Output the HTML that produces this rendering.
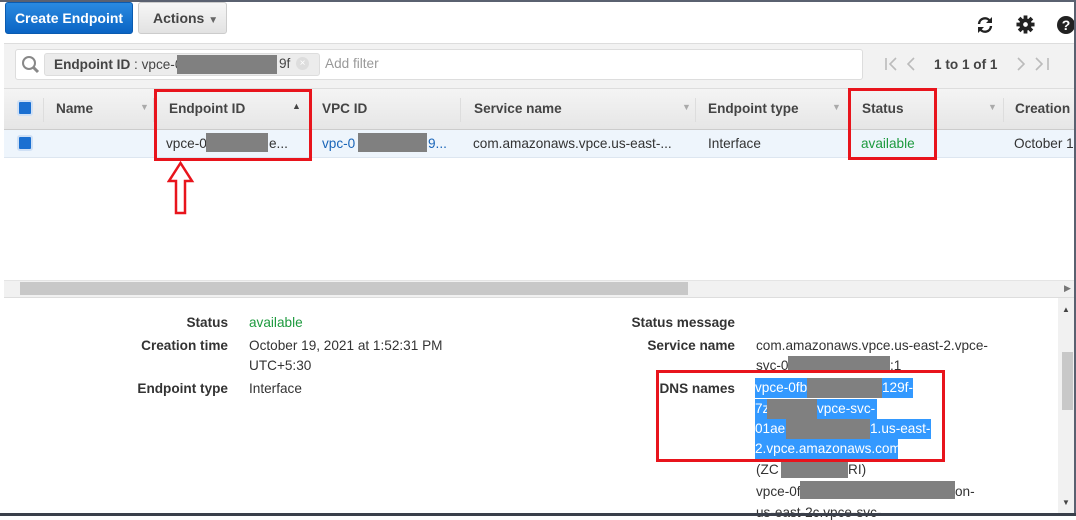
<!DOCTYPE html>
<html><head><style>
*{margin:0;padding:0;box-sizing:border-box}
body{width:1076px;height:516px;overflow:hidden;background:#fff;font-family:"Liberation Sans",Arial,sans-serif;font-size:13.6px;color:#333;position:relative}
.a{position:absolute;white-space:nowrap}
.red{position:absolute;border:3px solid #e8141c}
.blk{position:absolute;background:#808080}
.hd{font-weight:bold;color:#444}
.lbl{font-weight:bold;color:#333;text-align:right}
.sel{background:#3399ff;color:#fff;position:absolute;white-space:nowrap;height:20px;line-height:20px}
</style></head><body>
<div class="a" style="left:0;top:0;width:1076px;height:2px;background:#5a6170"></div>
<div class="a" style="left:5px;top:2px;width:128px;height:32px;border-radius:3px;background:linear-gradient(#2a8ae0,#0a64c4);border:1px solid #0a5bb0;color:#fff;font-weight:bold;font-size:14px;line-height:30px;text-align:center">Create Endpoint</div>
<div class="a" style="left:138px;top:2px;width:89px;height:32px;border-radius:3px;background:linear-gradient(#f6f6f6,#e2e2e2);border:1px solid #ccc;color:#444;font-weight:bold;font-size:14px;line-height:30px;padding-left:14px">Actions <span style="font-size:10px;color:#666">&#9660;</span></div>
<svg class="a" style="left:975px;top:15px" width="20" height="20" viewBox="0 0 20 20"><path d="M4 9a6 6 0 0 1 11-3M16 11a6 6 0 0 1-11 3" fill="none" stroke="#222" stroke-width="2.4"/><path d="M17 2v6h-6z M3 18v-6h6z" fill="#222"/></svg>
<svg class="a" style="left:1016px;top:15px" width="19" height="19" viewBox="0 0 20 20"><g fill="#222"><circle cx="10" cy="10" r="6.5"/><rect x="8" y="0.5" width="4" height="19"/><rect x="0.5" y="8" width="19" height="4"/><rect x="8" y="0.5" width="4" height="19" transform="rotate(45 10 10)"/><rect x="8" y="0.5" width="4" height="19" transform="rotate(-45 10 10)"/></g><circle cx="10" cy="10" r="2.5" fill="#fff"/></svg>
<div class="a" style="left:1057px;top:16px;width:18px;height:18px;border-radius:50%;background:#222;color:#fff;font-weight:bold;font-size:14px;text-align:center;line-height:18px">?</div>
<div class="a" style="left:4px;top:43px;width:1072px;height:46px;background:#f2f2f2;border-top:1px solid #ddd"></div>
<div class="a" style="left:15px;top:49px;width:848px;height:31px;background:#fff;border:1px solid #ddd;border-radius:3px"></div>
<svg class="a" style="left:21px;top:55px" width="20" height="20"><circle cx="8" cy="8" r="6" fill="none" stroke="#888" stroke-width="2"/><path d="M12 12l5 5" stroke="#888" stroke-width="3"/></svg>
<div class="a" style="left:44px;top:53px;width:276px;height:23px;background:#ececec;border:1px solid #ddd;border-radius:3px;line-height:21px;padding-left:9px;color:#444"><b>Endpoint ID</b> : vpce-0f</div>
<div class="blk" style="left:177px;top:55px;width:100px;height:19px"></div>
<div class="a" style="left:279px;top:56px;color:#444">9f</div>
<div class="a" style="left:296px;top:57px;width:13px;height:13px;border-radius:50%;background:#ddd;color:#fff;font-size:10px;text-align:center;line-height:13px">×</div>
<div class="a" style="left:325px;top:56px;color:#999">Add filter</div>
<svg class="a" style="left:884px;top:56px" width="40" height="16"><path d="M2 2v12M12 2l-6 6 6 6M30 2l-6 6 6 6" fill="none" stroke="#bbb" stroke-width="1.6"/></svg>
<div class="a" style="left:934px;top:57px;color:#444;font-weight:bold">1 to 1 of 1</div>
<svg class="a" style="left:1016px;top:56px" width="40" height="16"><path d="M2 2l6 6-6 6M20 2l6 6-6 6M32 2v12" fill="none" stroke="#bbb" stroke-width="1.6"/></svg>
<div class="a" style="left:4px;top:88px;width:1072px;height:42px;background:linear-gradient(#f4f4f4,#e6e6e6);border-top:1px solid #ddd;border-bottom:1px solid #ccc"></div>
<div class="a" style="left:17px;top:100px;width:16px;height:16px;background:#1a6fd1;border:2px solid #cfe0f5;border-radius:3px"></div>
<div class="a hd" style="left:56px;top:101px">Name</div><div class="a" style="left:140px;top:102px;color:#aaa;font-size:9px">&#9660;</div>
<div class="a hd" style="left:169px;top:101px">Endpoint ID</div><div class="a" style="left:292px;top:101px;color:#444;font-size:9px">&#9650;</div>
<div class="a hd" style="left:322px;top:101px">VPC ID</div>
<div class="a hd" style="left:474px;top:101px">Service name</div><div class="a" style="left:682px;top:102px;color:#aaa;font-size:9px">&#9660;</div>
<div class="a hd" style="left:708px;top:101px">Endpoint type</div><div class="a" style="left:832px;top:102px;color:#aaa;font-size:9px">&#9660;</div>
<div class="a hd" style="left:862px;top:101px">Status</div><div class="a" style="left:988px;top:102px;color:#aaa;font-size:9px">&#9660;</div>
<div class="a hd" style="left:1015px;top:101px">Creation</div>
<div class="a" style="left:43px;top:98px;width:1px;height:24px;background:#ddd"></div>
<div class="a" style="left:153px;top:98px;width:1px;height:24px;background:#ddd"></div>
<div class="a" style="left:460px;top:98px;width:1px;height:24px;background:#ddd"></div>
<div class="a" style="left:695px;top:98px;width:1px;height:24px;background:#ddd"></div>
<div class="a" style="left:1003px;top:98px;width:1px;height:24px;background:#ddd"></div>
<div class="a" style="left:4px;top:130px;width:1072px;height:28px;background:#eef5fc;border-bottom:1px solid #dde6f0"></div>
<div class="a" style="left:17px;top:135px;width:16px;height:16px;background:#1a6fd1;border:2px solid #cfe0f5;border-radius:3px"></div>
<div class="a" style="left:166px;top:136px">vpce-0</div><div class="blk" style="left:206px;top:133px;width:62px;height:19px"></div><div class="a" style="left:269px;top:136px">e...</div>
<div class="a" style="left:322px;top:136px;color:#1a65b8">vpc-0</div><div class="blk" style="left:358px;top:133px;width:69px;height:19px"></div><div class="a" style="left:428px;top:136px;color:#1a65b8">9...</div>
<div class="a" style="left:473px;top:136px">com.amazonaws.vpce.us-east-...</div>
<div class="a" style="left:708px;top:136px">Interface</div>
<div class="a" style="left:861px;top:136px;color:#1d9a3e">available</div>
<div class="a" style="left:1014px;top:136px">October 1</div>
<div class="red" style="left:154px;top:89px;width:158px;height:72px"></div>
<div class="red" style="left:848px;top:88px;width:89px;height:72px"></div>
<svg class="a" style="left:167px;top:161px" width="28" height="54"><path d="M13.5 2L2 20h7v32h9V20h7z" fill="#fff" stroke="#e8141c" stroke-width="2.5"/></svg>
<div class="a" style="left:4px;top:280px;width:1072px;height:17px;background:#f1f1f1;border-top:1px solid #e4e4e4"></div>
<div class="a" style="left:20px;top:282px;width:668px;height:13px;background:#c8c8c8"></div>
<div class="a" style="left:1064px;top:283px;color:#777;font-size:9px">&#9654;</div>
<div class="a" style="left:4px;top:297px;width:1072px;height:1px;background:#ddd"></div>
<div class="a lbl" style="left:100px;top:315px;width:128px">Status</div>
<div class="a" style="left:249px;top:315px;color:#1d9a3e">available</div>
<div class="a lbl" style="left:100px;top:338px;width:128px">Creation time</div>
<div class="a" style="left:249px;top:338px">October 19, 2021 at 1:52:31 PM</div>
<div class="a" style="left:249px;top:358px">UTC+5:30</div>
<div class="a lbl" style="left:100px;top:381px;width:128px">Endpoint type</div>
<div class="a" style="left:249px;top:381px">Interface</div>
<div class="a lbl" style="left:600px;top:315px;width:135px">Status message</div>
<div class="a lbl" style="left:600px;top:338px;width:135px">Service name</div>
<div class="a" style="left:756px;top:338px">com.amazonaws.vpce.us-east-2.vpce-</div>
<div class="a" style="left:756px;top:358px">svc-0</div><div class="blk" style="left:788px;top:356px;width:102px;height:16px"></div><div class="a" style="left:890px;top:358px">:1</div>
<div class="a lbl" style="left:600px;top:381px;width:135px">DNS names</div>
<div class="sel" style="left:755px;top:378px;width:158px">vpce-0fb</div><div class="blk" style="left:807px;top:378px;width:75px;height:20px"></div><div class="a" style="left:882px;top:378px;color:#fff;line-height:20px">129f-</div>
<div class="sel" style="left:755px;top:399px;width:122px">7z</div><div class="blk" style="left:767px;top:399px;width:50px;height:20px"></div><div class="a" style="left:817px;top:399px;color:#fff;line-height:20px">vpce-svc-</div>
<div class="sel" style="left:755px;top:419px;width:176px">01ae</div><div class="blk" style="left:786px;top:419px;width:84px;height:20px"></div><div class="a" style="left:870px;top:419px;color:#fff;line-height:20px">1.us-east-</div>
<div class="sel" style="left:755px;top:439px;width:143px">2.vpce.amazonaws.com</div>
<div class="a" style="left:756px;top:462px">(ZC</div><div class="blk" style="left:781px;top:460px;width:67px;height:18px"></div><div class="a" style="left:848px;top:462px">RI)</div>
<div class="a" style="left:756px;top:484px">vpce-0f</div><div class="blk" style="left:800px;top:481px;width:155px;height:18px"></div><div class="a" style="left:955px;top:484px">on-</div>
<div class="a" style="left:756px;top:505px">us-east-2c.vpce-svc-</div>
<div class="red" style="left:656px;top:370px;width:289px;height:92px"></div>
<div class="a" style="left:1058px;top:298px;width:18px;height:215px;background:#f1f1f1"></div>
<div class="a" style="left:1062px;top:352px;width:11px;height:58px;background:#c8c8c8"></div>
<div class="a" style="left:1062px;top:305px;color:#444;font-size:8px">&#9650;</div>
<div class="a" style="left:1062px;top:498px;color:#444;font-size:8px">&#9660;</div>
<div class="a" style="left:1074px;top:0;width:2px;height:516px;background:#5a6170"></div>
<div class="a" style="left:0;top:513px;width:1076px;height:3px;background:#3a3f4a"></div>
</body></html>
